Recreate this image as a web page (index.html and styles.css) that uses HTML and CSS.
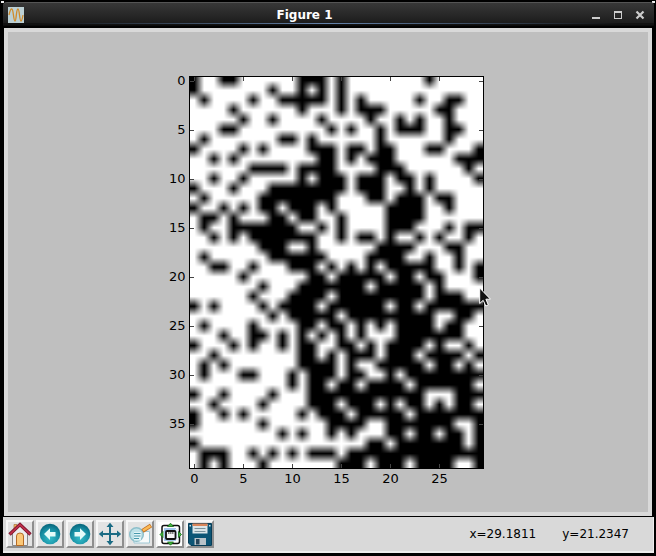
FILE: index.html
```html
<!DOCTYPE html>
<html lang="en">
<head>
<meta charset="utf-8">
<title>Figure 1</title>
<link rel="stylesheet" href="styles.css">
</head>
<body>
<div class="window">
  <header class="titlebar">
    <svg class="app-icon" viewBox="0 0 16 16" aria-hidden="true">
      <rect width="16" height="16" fill="#bcd0d4"/>
      <path d="M1 8C2 3 3 1.500 4 2C5.500 3 5.500 14 7 14C8.500 14 8 2 10 2C11.500 2 11.500 14 13 14C14 14 14.500 11 15 8" fill="none" stroke="#d08a28" stroke-width="1.300"/>
    </svg>
    <h1 class="title">Figure 1</h1>
    <div class="controls">
      <button class="control" aria-label="Minimize"><svg viewBox="0 0 10 10"><path d="M1 8h8" stroke="#ccc" stroke-width="2"/></svg></button>
      <button class="control" aria-label="Maximize"><svg viewBox="0 0 10 10"><path d="M1 1h8v8h-8zM2 3v5h6v-5z" fill="#ccc" fill-rule="evenodd"/></svg></button>
      <button class="control" aria-label="Close"><svg viewBox="0 0 10 10"><path d="M1.500 1.500l7 7M8.500 1.500l-7 7" stroke="#ccc" stroke-width="2.200"/></svg></button>
    </div>
  </header>

  <main class="figure">
    <div class="axes">
      <div class="y-axis">
        <span>0</span><span>5</span><span>10</span><span>15</span><span>20</span><span>25</span><span>30</span><span>35</span>
      </div>
      <div class="plot">
        <canvas id="plot" width="295" height="393"></canvas>
        <svg class="cursor" viewBox="0 0 12 20" aria-hidden="true">
          <path d="M.7 1V16.500L4.200 13.300L6.800 19L9.300 17.900L6.900 12.200H11.500Z" fill="#111" stroke="#fff"/>
        </svg>
      </div>
      <div class="x-axis">
        <span>0</span><span>5</span><span>10</span><span>15</span><span>20</span><span>25</span>
      </div>
    </div>
  </main>

  <footer class="toolbar">
    <div class="tools">
      <button class="tool" aria-label="Home"><svg viewBox="0 0 24 24">
        <path d="M6 2.500h3v6h-3z" fill="#f6b85c" stroke="#a8703c" stroke-width=".7"/>
        <path d="M4.500 11L12 4L19.500 11V23.500H4.500Z" fill="#ececec" stroke="#888"/>
        <path d="M8.500 23.500V14Q8.500 11 12 11T15.500 14V23.500Z" fill="#fbc878" stroke="#b56c26"/>
        <path d="M1.500 12.500L12 2.500L22.500 12.500" fill="none" stroke="#7d1730" stroke-width="3.400"/>
        <path d="M2 12.200L12 2.600L22 12.200" fill="none" stroke="#c0304a" stroke-width="1.600"/>
      </svg></button>
      <button class="tool" aria-label="Back"><svg viewBox="0 0 24 24">
        <defs><radialGradient id="orb" cx=".5" cy=".7" r=".65"><stop offset="0" stop-color="#35bdca"/><stop offset=".7" stop-color="#168ba0"/><stop offset="1" stop-color="#086a80"/></radialGradient></defs>
        <circle cx="12" cy="12" r="10.300" fill="url(#orb)"/>
        <path d="M6 12L12 6.200V10H17.500V14.500H12V18Z" fill="#e5fbf9"/>
      </svg></button>
      <button class="tool" aria-label="Forward"><svg viewBox="0 0 24 24">
        <circle cx="12" cy="12" r="10.300" fill="url(#orb)"/>
        <path d="M18 12L12 6.200V10H6.500V14.500H12V18Z" fill="#e5fbf9"/>
      </svg></button>
      <button class="tool" aria-label="Pan"><svg viewBox="0 0 24 24">
        <path d="M12 3V21M3 12H21" stroke="#1b6b84" stroke-width="2"/>
        <path d="M12 .8L15.500 5H8.500ZM12 23.200L15.500 19H8.500ZM.8 12L5 8.500V15.500ZM23.200 12L19 8.500V15.500Z" fill="#1b6b84"/>
      </svg></button>
      <button class="tool" aria-label="Zoom"><svg viewBox="0 0 24 24">
        <path d="M6 9.500H21.500V21H6Z" fill="#f7fafa" stroke="#9fc9d6"/>
        <circle cx="8.500" cy="12.500" r="6.800" fill="#bfe1e8" stroke="#8dbfca" stroke-width="1.500"/>
        <path d="M6 10H13V18.500H6Z" fill="#e2f4f7"/>
        <path d="M6 11.500H12.500M6 14H12.500M6 16.500H11" stroke="#4698ac"/>
        <path d="M14.500 9L23 3.500" stroke="#c07024" stroke-width="4.200"/>
        <path d="M15 8.500L22.500 3.800" stroke="#fbb955" stroke-width="2.600"/>
      </svg></button>
      <button class="tool tool-light" aria-label="Subplots"><svg viewBox="0 0 24 24">
        <rect x="4" y="3.500" width="17.500" height="18" rx="2" fill="#fff" stroke="#111" stroke-width="1.500"/>
        <path d="M6 6H18V19H6Z" fill="#a4c8ef"/>
        <path d="M17 7H19.500V18H17Z" fill="#dcebfa"/>
        <rect x="8" y="9" width="9.500" height="8" rx="1" fill="#f5f5f5" stroke="#111" stroke-width="1.800"/>
        <path d="M10 11h1.500M12 11h1.500M14 11h1.500" stroke="#111"/>
        <path d="M12.500 1.200L15.500 4.500H9.500ZM12.500 23.200L15.500 20H9.500ZM2 12.500L5 9.500V15.500ZM23.500 12.500L20.500 9.500V15.500Z" fill="#43b83d" stroke="#176b19" stroke-width=".8"/>
      </svg></button>
      <button class="tool" aria-label="Save"><svg viewBox="0 0 24 24">
        <path d="M.5 1.500H23.500V23.500H3L.5 21Z" fill="#0c5575" stroke="#063d58"/>
        <path d="M4.500 2H19.500V11.500H4.500Z" fill="#dbe5e8"/>
        <path d="M4.500 1.500H19.500V4H4.500Z" fill="#d9855a"/>
        <path d="M6.500 6.500H17.500M6.500 9.500H17.500" stroke="#7a929c"/>
        <path d="M6.500 16H18V23H6.500Z" fill="#b9c3c9"/>
        <path d="M8 17H11.500V22.500H8Z" fill="#25455a"/>
        <path d="M1.500 3h1.500v1.500h-1.500zM21 3h1.500v1.500h-1.500z" fill="#cfe0e6"/>
      </svg></button>
    </div>
    <p class="status"><span>x=29.1811</span><span>y=21.2347</span></p>
  </footer>
</div>
<script src="plot.js"></script>
</body>
</html>
```
FILE: styles.css
```css
* {
  box-sizing: border-box;
}

body {
  margin: 0;
  background: #000;
  font-family: "DejaVu Sans", sans-serif;
  color: #000;
}

button {
  margin: 0;
  padding: 0;
  border: 0;
  background: none;
}

svg,
canvas {
  display: block;
}

.window {
  display: flex;
  flex-direction: column;
  min-height: 100vh;
  padding: 2px 2px 3px 3px;
  background:
    linear-gradient(#eee, #eee) 1px 1px / 3px 2px no-repeat,
    linear-gradient(#eee, #eee) calc(100% - 1px) 1px / 3px 2px no-repeat,
    #000;
}

.titlebar {
  display: flex;
  align-items: center;
  height: 24px;
  margin-bottom: 2px;
  padding: 0 3px 0 5px;
  border-top: 1px solid #555;
  border-radius: 4px 4px 0 0;
  background:
    linear-gradient(90deg, #111 5%, #6482aa 50%, #111 95%) 0 20px / 100% 1px no-repeat,
    linear-gradient(#383838, #1d1d1d 85%, #080808);
}

.app-icon {
  width: 16px;
  height: 16px;
}

.title {
  flex: 1;
  margin: 0;
  font-size: 12px;
  line-height: 16px;
  text-align: center;
  color: #fff;
}

.controls {
  display: flex;
}

.control {
  display: flex;
  justify-content: center;
  width: 22px;
}

.control svg {
  width: 10px;
  height: 10px;
}

.figure {
  display: flex;
  flex: 1;
  justify-content: center;
  align-items: flex-start;
  padding: 44px 0 23px 16px;
  border: 4px solid #d9d9d9;
  margin: 0 2px 1px 1px;
  background: #bfbfbf;
}

.axes {
  display: grid;
  grid-template-columns: 24px 295px 24px;
  font-size: 13px;
}

.y-axis {
  display: grid;
  grid-template-rows: repeat(8, 49px);
  padding-right: 3px;
  line-height: 10px;
  text-align: right;
}

.plot {
  position: relative;
}

.cursor {
  position: absolute;
  left: 290px;
  top: 211px;
  width: 12px;
  height: 20px;
}

.x-axis {
  display: grid;
  grid-column: 2;
  grid-template-columns: repeat(6, 49px);
  line-height: 20px;
}

.x-axis span {
  display: flex;
  justify-content: center;
  width: 12px;
}

.toolbar {
  display: flex;
  align-items: center;
  justify-content: space-between;
  height: 36px;
  padding: 0 24px 0 3px;
  border-right: 1px solid #ededed;
  border-bottom: 2px solid #ededed;
  background: #d9d9d9;
}

.tools {
  display: flex;
  gap: 2px;
}

.tool {
  width: 28px;
  height: 28px;
  border: 2px solid;
  border-color: #f7f7f7 #8e8e8e #8e8e8e #f7f7f7;
  background: #e3e3e3;
}

.tool-light {
  background: #fff;
}

.tool svg {
  width: 24px;
  height: 24px;
}

.status {
  display: flex;
  gap: 26px;
  margin: 0;
  font-size: 12px;
  line-height: 16px;
}
```
FILE: plot.js
```js
// 40 x 30 grid of cells, 1 = black.
const rows = [
  "100110000001110" + "100000000100000",
  "100000001001010" + "100000000000000",
  "010000100111110" + "101000001001100",
  "000010000001000" + "101110000011000",
  "000001001000010" + "000100101001000",
  "000110000000001" + "010010111001100",
  "010000000110100" + "000010000001000",
  "100001010000111" + "011011000110001",
  "001010000000011" + "010111000000111",
  "000000111101111" + "000011100000010",
  "001001000001011" + "101110110100001",
  "100010001111111" + "101110010100000",
  "010000011111111" + "000110111011000",
  "100101011011101" + "000001111001000",
  "011010001101100" + "100001111000000",
  "010011111110010" + "100001110001011",
  "001010111111100" + "101101001010010",
  "000000011100100" + "000011110001100",
  "010000001111110" + "000111100100100",
  "001100100011101" + "010101111100101",
  "000001000000110" + "111110110110001",
  "000000010001111" + "111011111010000",
  "000000100011110" + "111111111011100",
  "101000010111101" + "111110110111111",
  "000000001011111" + "011111111100110",
  "010000100001101" + "101010111101100",
  "000100110101010" + "101000111111100",
  "100010100101100" + "110101111010010",
  "001000000001101" + "011101110111101",
  "010100000001111" + "010011111011010",
  "010001100010111" + "011001011111111",
  "000000000010110" + "110111101111110",
  "100100001000111" + "111111111000111",
  "001000010000111" + "011101011010110",
  "100101000001011" + "101111101111111",
  "100000010000001" + "111001111111001",
  "000000000101001" + "010001101101101",
  "100000000000000" + "000110111111101",
  "011100101010111" + "011111111111111",
  "010100010000000" + "111011101111001"
];

const canvas = document.getElementById("plot");
const ctx = canvas.getContext("2d");
const W = canvas.width;
const H = canvas.height;
const clamp = (v, max) => Math.max(0, Math.min(max, v));
const cell = (r, c) => (rows[clamp(r, 39)][clamp(c, 29)] === "1" ? 0 : 255);

// Bilinear interpolation between cell centres.
const image = ctx.createImageData(W, H);
for (let y = 0; y < H; y++) {
  const v = (y + 1) / 9.82 - 0.5;
  const r = Math.floor(v);
  const fy = v - r;
  for (let x = 0; x < W; x++) {
    const u = x / 9.8 - 0.5;
    const c = Math.floor(u);
    const fx = u - c;
    const top = cell(r, c) * (1 - fx) + cell(r, c + 1) * fx;
    const bottom = cell(r + 1, c) * (1 - fx) + cell(r + 1, c + 1) * fx;
    const g = top * (1 - fy) + bottom * fy;
    image.data.set([g, g, g, 255], (y * W + x) * 4);
  }
}
ctx.putImageData(image, 0, 0);

// Frame and tick marks.
ctx.strokeRect(0.5, 0.5, W - 1, H - 1);
ctx.fillStyle = "#444";
for (let x = 5; x < W; x += 49) {
  ctx.fillRect(x, 1, 1, 4);
  ctx.fillRect(x, H - 5, 1, 4);
}
for (let y = 5; y < H; y += 49) {
  ctx.fillRect(1, y, 4, 1);
  ctx.fillRect(W - 5, y, 4, 1);
}
```
